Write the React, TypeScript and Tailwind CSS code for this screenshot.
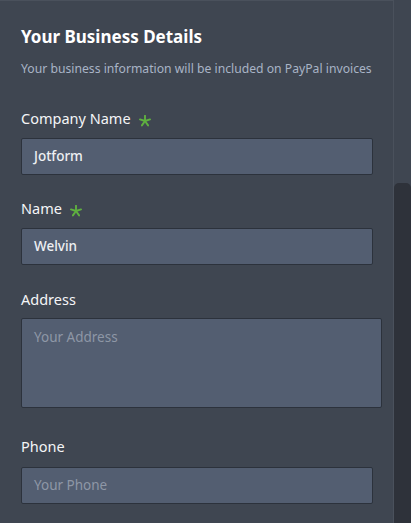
import type { ReactNode } from 'react';

const font = { fontFamily: '"Noto Sans", "Open Sans", sans-serif' };

function Star() {
  return (
    <svg viewBox="0 0 12 12" className="ml-[8px] mt-[5px] h-[12px] w-[12px]" aria-hidden>
      <g stroke="#5fb040" strokeWidth="1.9" strokeLinecap="round">
        <line x1="6" y1="0.8" x2="6" y2="6" />
        <line x1="6" y1="6" x2="1" y2="4.4" />
        <line x1="6" y1="6" x2="11" y2="4.4" />
        <line x1="6" y1="6" x2="2.9" y2="10.4" />
        <line x1="6" y1="6" x2="9.1" y2="10.4" />
      </g>
    </svg>
  );
}

function Label({ children, required }: { children: ReactNode; required?: boolean }) {
  return (
    <div className="flex h-[20px] items-center text-[14.5px] leading-[20px] text-[#f4f5f7]">
      <span>{children}</span>
      {required && <Star />}
    </div>
  );
}

function TextInput({ value, placeholder }: { value?: string; placeholder?: string }) {
  return (
    <div className="flex h-[37px] w-[352px] items-center rounded-[2px] border border-[#2c323c] bg-[#535e71] px-[12px] text-[13.5px]">
      {value ? (
        <span className="font-medium text-[#eef0f3]">{value}</span>
      ) : (
        <span className="text-[#8e97a6]">{placeholder}</span>
      )}
    </div>
  );
}

export default function App() {
  return (
    <div className="flex h-[523px] w-[411px] overflow-hidden bg-[#3f4651]" style={font}>
      <div className="flex w-[394px] flex-col border-r border-t border-[#4a515c] pl-[21px]">
        <h1 className="mt-[25px] text-[17px] font-bold leading-[22px] text-white">Your Business Details</h1>
        <p className="mt-[12px] text-[12.2px] leading-[18px] text-[#a9b4c6]">
          Your business information will be included on PayPal invoices
        </p>

        <div className="mt-[30px]">
          <Label required>Company Name</Label>
        </div>
        <div className="mt-[10px]">
          <TextInput value="Jotform" />
        </div>

        <div className="mt-[23px]">
          <Label required>Name</Label>
        </div>
        <div className="mt-[10px]">
          <TextInput value="Welvin" />
        </div>

        <div className="mt-[24px]">
          <Label>Address</Label>
        </div>
        <div className="mt-[9px] h-[90px] w-[361px] rounded-[2px] border border-[#2c323c] bg-[#535e71] px-[12px] pt-[8px] text-[13.5px] text-[#8e97a6]">
          Your Address
        </div>

        <div className="mt-[28px]">
          <Label>Phone</Label>
        </div>
        <div className="mt-[11px]">
          <TextInput placeholder="Your Phone" />
        </div>
      </div>
      <div className="flex w-[17px] flex-col">
        <div className="mt-[183px] flex-1 rounded-t-[5px] bg-[#2e323a]" />
      </div>
    </div>
  );
}
